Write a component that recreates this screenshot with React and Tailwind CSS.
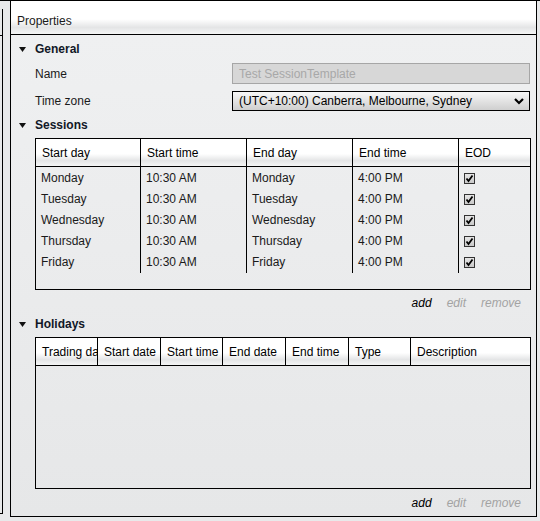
import React from 'react';

const sessions = [
  ['Monday', '10:30 AM', 'Monday', '4:00 PM'],
  ['Tuesday', '10:30 AM', 'Tuesday', '4:00 PM'],
  ['Wednesday', '10:30 AM', 'Wednesday', '4:00 PM'],
  ['Thursday', '10:30 AM', 'Thursday', '4:00 PM'],
  ['Friday', '10:30 AM', 'Friday', '4:00 PM'],
];

const sessionCols = [
  { label: 'Start day', w: 'w-[105px]' },
  { label: 'Start time', w: 'w-[106px]' },
  { label: 'End day', w: 'w-[106px]' },
  { label: 'End time', w: 'w-[106px]' },
  { label: 'EOD', w: 'flex-1' },
];

const holidayCols = [
  { label: 'Trading day', w: 'w-[62px]' },
  { label: 'Start date', w: 'w-[63px]' },
  { label: 'Start time', w: 'w-[62px]' },
  { label: 'End date', w: 'w-[63px]' },
  { label: 'End time', w: 'w-[63px]' },
  { label: 'Type', w: 'w-[62px]' },
  { label: 'Description', w: 'flex-1' },
];

const headerBg =
  'bg-[linear-gradient(to_bottom,#ffffff_0%,#ffffff_55%,#e4e5e6_80%,#f4f5f5_100%)]';

function SectionTitle({ children }) {
  return (
    <div className="flex items-center h-[18px]">
      <svg width="7" height="5" viewBox="0 0 7 5" className="ml-[8px] mr-[9px]">
        <polygon points="0,0 7,0 3.5,5" fill="#111" />
      </svg>
      <span className="font-bold text-[#111827]">{children}</span>
    </div>
  );
}

function Actions() {
  return (
    <div className="flex justify-end items-center h-[18px] pr-[10px] gap-[15px] italic">
      <span className="text-black">add</span>
      <span className="text-[#a3a3a3]">edit</span>
      <span className="text-[#a3a3a3]">remove</span>
    </div>
  );
}

function Check() {
  return (
    <div className="w-[11px] h-[11px] border border-[#333] bg-[linear-gradient(to_bottom,#e6e6e6,#c9c9c9)] flex items-center justify-center">
      <svg width="9" height="9" viewBox="0 0 9 9">
        <polyline points="1.5,4.5 3.5,7 7.5,1.5" fill="none" stroke="#000" strokeWidth="1.8" />
      </svg>
    </div>
  );
}

export default function App() {
  return (
    <div
      className="w-[540px] h-[521px] bg-[#e8e9ea] flex border-t border-black text-[12px] text-[#1a1a1a] overflow-hidden"
      style={{ fontFamily: '"Liberation Sans", Arial, sans-serif' }}
    >
      <div className="w-[3px] h-[505px] mt-[8px] border-r border-b border-black">
        <div className="h-[27px] border-b border-black" />
      </div>

      <div className="ml-[7px] w-[527px] h-[516px] border-x border-b border-black flex flex-col">
        <div className={`h-[34px] border-b border-black flex items-center pl-[6px] pt-[6px] ${headerBg}`}>
          Properties
        </div>

        <div className="flex-1 flex flex-col pt-[5px] pr-[5px] bg-[linear-gradient(to_bottom,#eff0f1,#e6e7e8)]">
          <SectionTitle>General</SectionTitle>

          <div className="flex items-center mt-[5px] h-[21px]">
            <span className="ml-[24px] flex-1">Name</span>
            <div className="w-[298px] h-[21px] mr-[1px] border border-[#a6a6a6] bg-[#d7d7d7] text-[#a8a8a8] flex items-center pl-[6px]">
              Test SessionTemplate
            </div>
          </div>

          <div className="flex items-center mt-[7px] h-[20px]">
            <span className="ml-[24px] flex-1">Time zone</span>
            <div className="w-[298px] h-[20px] mr-[1px] border border-black bg-[linear-gradient(to_bottom,#f7f7f7,#cfcfcf)] flex items-center pl-[6px] pr-[5px] text-black">
              <span className="flex-1">(UTC+10:00) Canberra, Melbourne, Sydney</span>
              <svg width="10" height="7" viewBox="0 0 10 7">
                <polyline points="1,1 5,5 9,1" fill="none" stroke="#000" strokeWidth="2.2" />
              </svg>
            </div>
          </div>

          <div className="mt-[5px]">
            <SectionTitle>Sessions</SectionTitle>
          </div>

          <div className="ml-[24px] mt-[4px] h-[152px] border border-black flex flex-col">
            <div className={`flex h-[28px] border-b border-black ${headerBg}`}>
              {sessionCols.map((c, i) => (
                <div
                  key={c.label}
                  className={`${c.w} ${i < sessionCols.length - 1 ? 'border-r border-black' : ''} flex items-center pl-[6px] pt-[1px] text-black`}
                >
                  {c.label}
                </div>
              ))}
            </div>
            <div className="flex">
              {sessionCols.map((c, ci) => (
                <div
                  key={c.label}
                  className={`${c.w} ${ci < sessionCols.length - 1 ? 'border-r border-black' : ''} flex flex-col h-[106px]`}
                >
                  {sessions.map((row, ri) => (
                    <div key={ri} className="h-[21px] flex items-center pl-[5px] pt-[1px]">
                      {ci < 4 ? row[ci] : <Check />}
                    </div>
                  ))}
                </div>
              ))}
            </div>
          </div>

          <div className="mt-[4px]">
            <Actions />
          </div>

          <div className="mt-[3px]">
            <SectionTitle>Holidays</SectionTitle>
          </div>

          <div className="ml-[24px] mt-[4px] h-[152px] border border-black flex flex-col">
            <div className={`flex h-[28px] border-b border-black ${headerBg}`}>
              {holidayCols.map((c, i) => (
                <div
                  key={c.label}
                  className={`${c.w} ${i < holidayCols.length - 1 ? 'border-r border-black' : ''} flex items-center pl-[6px] pt-[1px] text-black overflow-hidden whitespace-nowrap`}
                >
                  {c.label}
                </div>
              ))}
            </div>
          </div>

          <div className="mt-[5px]">
            <Actions />
          </div>
        </div>
      </div>
    </div>
  );
}
